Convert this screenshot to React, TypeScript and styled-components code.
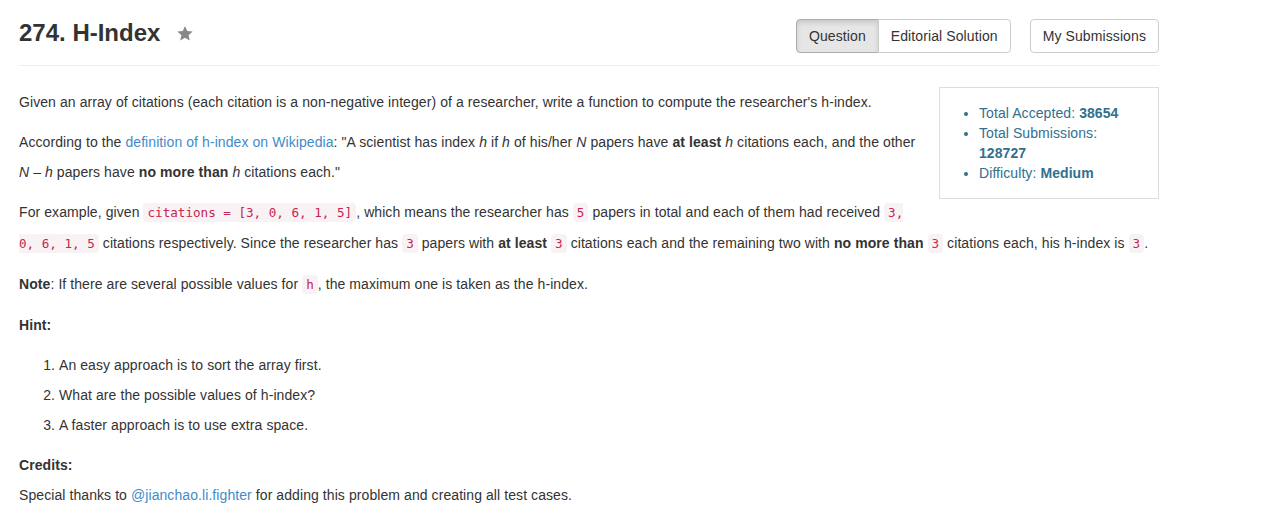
import React from "react";
import styled, { createGlobalStyle } from "styled-components";

const Global = createGlobalStyle`
  html, body { margin: 0; padding: 0; background: #fff; }
  body {
    font-family: "Liberation Sans", Arial, Helvetica, sans-serif;
    font-size: 14px;
    color: #333;
    letter-spacing: 0.08px;
  }
  * { box-sizing: border-box; }
`;

const Page = styled.div`
  width: 1159px;
  padding-left: 19px;
`;

const Header = styled.div`
  display: flex;
  align-items: flex-start;
  justify-content: space-between;
  padding-top: 19px;
`;

const TitleWrap = styled.div`
  display: flex;
  align-items: center;
  margin-top: 1px;
`;

const Title = styled.h3`
  margin: 0;
  font-size: 24px;
  line-height: 26px;
  font-weight: bold;
  color: #333;
  letter-spacing: 0;
`;

const StarIcon = styled.svg`
  width: 18px;
  height: 17px;
  margin-left: 16px;
  fill: #888;
`;

const Actions = styled.div`
  display: flex;
  gap: 19px;
`;

const Group = styled.div`
  display: flex;
`;

const Btn = styled.button<{ $active?: boolean; $pos?: "left" | "right" | "single" }>`
  font-family: "Liberation Sans", Arial, sans-serif;
  font-size: 14px;
  letter-spacing: 0.1px;
  line-height: 20px;
  padding: 6px 12px;
  color: #333;
  background: ${(p) => (p.$active ? "#e6e6e6" : "#fff")};
  border: 1px solid ${(p) => (p.$active ? "#adadad" : "#ccc")};
  box-shadow: ${(p) => (p.$active ? "inset 0 3px 5px rgba(0,0,0,0.125)" : "none")};
  border-radius: ${(p) =>
    p.$pos === "left" ? "4px 0 0 4px" : p.$pos === "right" ? "0 4px 4px 0" : "4px"};
  margin-left: ${(p) => (p.$pos === "right" ? "-1px" : "0")};
  cursor: pointer;
`;

const Rule = styled.hr`
  border: 0;
  border-top: 1px solid #eee;
  margin: 12px 0 21px 0;
`;

const Content = styled.div`
  width: 1140px;
  line-height: 30px;
`;

const Side = styled.div`
  float: right;
  width: 220px;
  margin: 0 0 10px 20px;
  border: 1px solid #ddd;
  padding: 15px;
  color: #31708f;
  line-height: 20px;
`;

const SideList = styled.ul`
  margin: 0;
  padding-left: 24px;
`;

const P = styled.p`
  margin: 0 0 10px 0;
`;

const Link = styled.a`
  color: #428bca;
  text-decoration: none;
`;

const Code = styled.code`
  font-family: "DejaVu Sans Mono", Menlo, monospace;
  font-size: 90%;
  letter-spacing: 0;
  color: #c7254e;
  background: #f9f2f4;
  padding: 2px 4px;
  border-radius: 4px;
`;

const Hints = styled.ol`
  margin: 0 0 10px 0;
  padding-left: 40px;
`;

export default function App() {
  return (
    <Page>
      <Global />
      <Header>
        <TitleWrap>
          <Title>274. H-Index</Title>
          <StarIcon viewBox="0 0 24 24">
            <path d="M12 1.5l3.1 7.1 7.7.7-5.8 5.1 1.7 7.6L12 18l-6.7 4 1.7-7.6-5.8-5.1 7.7-.7z" />
          </StarIcon>
        </TitleWrap>
        <Actions>
          <Group>
            <Btn $active $pos="left">Question</Btn>
            <Btn $pos="right">Editorial Solution</Btn>
          </Group>
          <Btn $pos="single">My Submissions</Btn>
        </Actions>
      </Header>
      <Rule />
      <Content>
        <Side>
          <SideList>
            <li>
              Total Accepted: <b>38654</b>
            </li>
            <li>
              Total Submissions: <b>128727</b>
            </li>
            <li>
              Difficulty: <b>Medium</b>
            </li>
          </SideList>
        </Side>
        <P>
          Given an array of citations (each citation is a non-negative integer) of a researcher, write a
          function to compute the researcher's h-index.
        </P>
        <P>
          According to the <Link href="#">definition of h-index on Wikipedia</Link>: "A scientist has index{" "}
          <i>h</i> if <i>h</i> of his/her <i>N</i> papers have <b>at least</b> <i>h</i> citations each, and
          the other <i>N</i> – <i>h</i> papers have <b>no more than</b> <i>h</i> citations each."
        </P>
        <P>
          For example, given <Code>citations = [3, 0, 6, 1, 5]</Code>, which means the researcher has{" "}
          <Code>5</Code> papers in total and each of them had received <Code>3, 0, 6, 1, 5</Code> citations
          respectively. Since the researcher has <Code>3</Code> papers with <b>at least</b> <Code>3</Code>{" "}
          citations each and the remaining two with <b>no more than</b> <Code>3</Code> citations each, his
          h-index is <Code>3</Code>.
        </P>
        <P>
          <b>Note</b>: If there are several possible values for <Code>h</Code>, the maximum one is taken as
          the h-index.
        </P>
        <P>
          <b>Hint:</b>
        </P>
        <Hints>
          <li>An easy approach is to sort the array first.</li>
          <li>What are the possible values of h-index?</li>
          <li>A faster approach is to use extra space.</li>
        </Hints>
        <P>
          <b>Credits:</b>
          <br />
          Special thanks to <Link href="#">@jianchao.li.fighter</Link> for adding this problem and creating
          all test cases.
        </P>
      </Content>
    </Page>
  );
}
